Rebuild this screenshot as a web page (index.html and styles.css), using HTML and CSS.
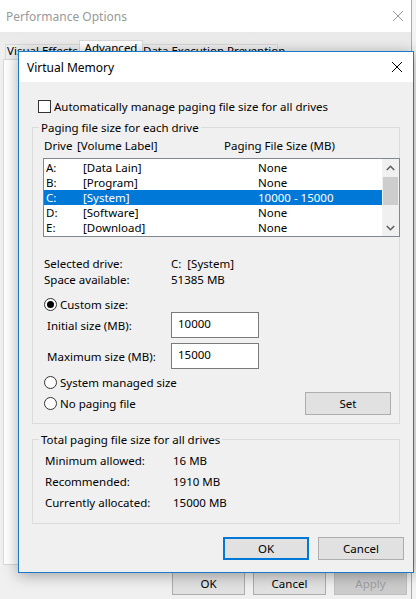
FILE: index.html
```html
<!DOCTYPE html>
<html>
<head>
  <title>Virtual Memory</title>
  <meta charset="utf-8">
  <link rel="stylesheet" href="styles.css">
</head>
<body>
  <div class="perf">
    <div class="perf-title">
      <span>Performance Options</span>
      <svg class="close-icon" width="10" height="10" viewBox="0 0 10 10"><path d="M0 0L10 10M10 0L0 10" stroke="#9a9a9a" stroke-width="1"/></svg>
    </div>
    <div class="perf-body">
      <div class="tabs">
        <div class="tab tab-visual">Visual Effects</div>
        <div class="tab tab-active">Advanced</div>
        <div class="tab tab-dep">Data Execution Prevention</div>
      </div>
      <div class="tab-panel"></div>
      <div class="perf-buttons">
        <button class="btn btn-small">OK</button>
        <button class="btn btn-small">Cancel</button>
        <button class="btn btn-small" disabled>Apply</button>
      </div>
    </div>
  </div>

  <div class="vm">
    <div class="vm-title">
      <span>Virtual Memory</span>
      <svg class="close-icon" width="10" height="10" viewBox="0 0 10 10"><path d="M0 0L10 10M10 0L0 10" stroke="#000" stroke-width="1"/></svg>
    </div>
    <div class="vm-body">
      <div class="auto-row">
        <span class="checkbox"></span>
        <span>Automatically manage paging file size for all drives</span>
      </div>

      <div class="group group-drives">
        <div class="group-title">Paging file size for each drive</div>
        <div class="list-head">
          <span class="h-drive">Drive</span>
          <span class="h-label">[Volume Label]</span>
          <span>Paging File Size (MB)</span>
        </div>
        <div class="listbox">
          <div class="rows">
            <div class="row"><span class="c-letter">A:</span><span class="c-label">[Data Lain]</span><span>None</span></div>
            <div class="row"><span class="c-letter">B:</span><span class="c-label">[Program]</span><span>None</span></div>
            <div class="row selected"><span class="c-letter">C:</span><span class="c-label">[System]</span><span>10000 - 15000</span></div>
            <div class="row"><span class="c-letter">D:</span><span class="c-label">[Software]</span><span>None</span></div>
            <div class="row"><span class="c-letter">E:</span><span class="c-label">[Download]</span><span>None</span></div>
          </div>
          <div class="scrollbar">
            <div class="arrow arrow-up">
              <svg width="9" height="6" viewBox="0 0 9 6"><path d="M0.8 5L4.5 1.3L8.2 5" fill="none" stroke="#606060" stroke-width="1.6"/></svg>
            </div>
            <div class="thumb"></div>
            <div class="track"></div>
            <div class="arrow arrow-down">
              <svg width="9" height="6" viewBox="0 0 9 6"><path d="M0.8 1L4.5 4.7L8.2 1" fill="none" stroke="#606060" stroke-width="1.6"/></svg>
            </div>
          </div>
        </div>

        <div class="info">
          <div class="info-row"><span class="info-label">Selected drive:</span><span>C:&nbsp;&nbsp;[System]</span></div>
          <div class="info-row"><span class="info-label">Space available:</span><span>51385 MB</span></div>
        </div>

        <div class="radio-row radio-custom">
          <span class="radio on"></span>
          <span>Custom size:</span>
        </div>
        <div class="size-row">
          <span class="size-label">Initial size (MB):</span>
          <input class="field" type="text" value="10000">
        </div>
        <div class="size-row">
          <span class="size-label">Maximum size (MB):</span>
          <input class="field" type="text" value="15000">
        </div>
        <div class="radio-row radio-system">
          <span class="radio"></span>
          <span>System managed size</span>
        </div>
        <div class="radio-row radio-none">
          <span class="radio"></span>
          <span class="radio-text">No paging file</span>
          <button class="btn btn-set">Set</button>
        </div>
      </div>

      <div class="group group-total">
        <div class="group-title">Total paging file size for all drives</div>
        <div class="total-rows">
          <div class="total-row"><span class="total-label">Minimum allowed:</span><span>16 MB</span></div>
          <div class="total-row"><span class="total-label">Recommended:</span><span>1910 MB</span></div>
          <div class="total-row"><span class="total-label">Currently allocated:</span><span>15000 MB</span></div>
        </div>
      </div>

      <div class="vm-buttons">
        <button class="btn btn-default">OK</button>
        <button class="btn">Cancel</button>
      </div>
    </div>
  </div>
</body>
</html>
```

FILE: styles.css
```css
body {
  margin: 0;
  width: 416px;
  height: 599px;
  overflow: hidden;
  position: relative;
  background-color: #f3f3f3;
  font-family: "Noto Sans", "Liberation Sans", sans-serif;
  font-size: 11.5px;
  color: #000;
}

button, input {
  font-family: inherit;
  font-size: inherit;
  color: inherit;
}

.close-icon {
  display: block;
}

/* Fenetre de fond */
.perf {
  position: absolute;
  left: 0;
  top: 0;
  width: 411px;
  height: 610px;
  border-right: 1px solid #aaaaaa;
  background-color: #f0f0f0;
}

.perf-title {
  height: 32px;
  background-color: #fff;
  display: flex;
  align-items: center;
  justify-content: space-between;
  padding: 0 8px 0 6px;
  color: #999;
  font-size: 12px;
}

.perf-body {
  background: linear-gradient(#e9e9e9, #f0f0f0 20px);
}

.tabs {
  display: flex;
  align-items: flex-end;
  padding: 7px 0 0 5px;
  height: 20px;
}

.tab {
  box-sizing: border-box;
  height: 15px;
  border: 1px solid #d9d9d9;
  border-bottom: none;
  border-right: none;
  text-align: center;
  line-height: 11px;
  white-space: nowrap;
  background-color: #f0f0f0;
}

.tab-visual {
  width: 74px;
}

.tab-active {
  width: 64px;
  height: 20px;
  margin-bottom: -1px;
  border-right: 1px solid #d9d9d9;
  background-color: #fff;
  position: relative;
  line-height: 14px;
}

.tab-dep {
  width: 135px;
  border-left: none;
  border-right: 1px solid #d9d9d9;
}

.tab-panel {
  box-sizing: border-box;
  margin-left: 3px;
  width: 402px;
  height: 506px;
  border: 1px solid #d9d9d9;
  background-color: #fff;
}

.perf-buttons {
  display: flex;
  justify-content: flex-end;
  gap: 8px;
  padding: 7px 4px 0 0;
}

.btn {
  box-sizing: border-box;
  height: 23px;
  padding: 0;
  border: 1px solid #adadad;
  background-color: #e1e1e1;
  line-height: 20px;
}

.btn-small {
  width: 73px;
}

.btn:disabled {
  color: #a0a0a0;
  border-color: #bfbfbf;
  background-color: #cccccc;
}

/* Dialogue Virtual Memory */
.vm {
  position: absolute;
  left: 18px;
  top: 51px;
  width: 396px;
  height: 522px;
  box-sizing: border-box;
  border: 1px solid #1979ca;
  background-color: #f0f0f0;
  box-shadow: 0 2px 14px rgba(0, 0, 0, 0.35);
}

.vm-title {
  height: 30px;
  background-color: #fff;
  display: flex;
  align-items: center;
  justify-content: space-between;
  padding: 0 11px 0 8px;
  font-size: 12px;
}

.vm-body {
  padding: 0 13px;
}

.auto-row {
  display: flex;
  align-items: center;
  gap: 3px;
  height: 13px;
  margin-top: 18px;
  padding-left: 6px;
}

.checkbox {
  box-sizing: border-box;
  width: 13px;
  height: 13px;
  border: 1px solid #333;
  background-color: #fff;
}

.group {
  border: 1px solid #dcdcdc;
  width: 368px;
  box-sizing: border-box;
}

.group-title {
  display: table;
  margin: -8px 0 0 6px;
  padding: 0 2px;
  line-height: 15px;
  background-color: #f0f0f0;
}

.group-drives {
  margin-top: 14px;
  padding-bottom: 8px;
}

.list-head {
  display: flex;
  margin-top: 3px;
  padding-left: 11px;
  line-height: 16px;
}

.h-drive {
  width: 33px;
}

.h-label {
  width: 147px;
}

.listbox {
  display: flex;
  box-sizing: border-box;
  width: 357px;
  height: 79px;
  margin: 4px 0 0 10px;
  border: 1px solid #828790;
  background-color: #fff;
  padding: 1px 0;
}

.rows {
  width: 338px;
}

.row {
  display: flex;
  height: 15px;
  line-height: 15px;
  padding-left: 2px;
}

.row.selected {
  background-color: #0078d7;
  color: #fff;
}

.c-letter {
  width: 37px;
}

.c-label {
  width: 175px;
}

.scrollbar {
  width: 17px;
  margin: -1px 0;
  display: flex;
  flex-direction: column;
  background-color: #f0f0f0;
}

.arrow {
  display: flex;
  align-items: center;
  justify-content: center;
  height: 17px;
}

.arrow-up {
  height: 18px;
}

.thumb {
  height: 28px;
  margin: 0 1px;
  background-color: #cdcdcd;
}

.track {
  flex: 1;
}

.info {
  margin-top: 19px;
  padding-left: 11px;
}

.info-row {
  display: flex;
  line-height: 16px;
}

.info-label {
  width: 127px;
}

.radio-row {
  display: flex;
  align-items: center;
  gap: 3px;
  padding-left: 11px;
}

.radio {
  box-sizing: border-box;
  width: 13px;
  height: 13px;
  border: 1px solid #333;
  border-radius: 50%;
  background-color: #fff;
  display: flex;
  align-items: center;
  justify-content: center;
}

.radio.on::after {
  content: "";
  width: 7px;
  height: 7px;
  border-radius: 50%;
  background-color: #000;
}

.radio-custom {
  margin-top: 9px;
  height: 15px;
}

.size-row {
  display: flex;
  align-items: center;
  padding-left: 14px;
  margin-bottom: 5px;
}

.size-label {
  width: 124px;
}

.field {
  box-sizing: border-box;
  width: 88px;
  height: 26px;
  margin: 0;
  padding: 0 0 3px 6px;
  border: 1px solid #7a7a7a;
  background-color: #fff;
  outline: none;
}

.radio-system {
  margin-top: 4px;
  height: 16px;
}

.radio-none {
  margin-top: 2px;
  height: 23px;
}

.radio-text {
  flex: 1;
}

.btn-set {
  width: 86px;
  margin-right: 8px;
}

.group-total {
  margin-top: 15px;
  padding-bottom: 10px;
}

.total-rows {
  margin-top: 3px;
}

.total-row {
  display: flex;
  line-height: 21px;
  padding-left: 12px;
}

.total-label {
  width: 128px;
}

.vm-buttons {
  display: flex;
  justify-content: flex-end;
  gap: 9px;
  margin-top: 13px;
  margin-right: -4px;
}

.vm-buttons .btn {
  width: 86px;
}

.btn-default {
  border: 2px solid #0078d7;
}
```
